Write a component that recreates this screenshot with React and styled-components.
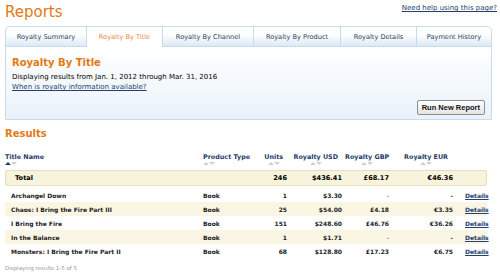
import React from 'react'
import styled, { createGlobalStyle } from 'styled-components'

const GlobalStyle = createGlobalStyle`
  html, body {
    margin: 0;
    padding: 0;
    background: #fff;
  }
  body {
    font-family: "DejaVu Sans", Verdana, sans-serif;
    color: #000;
  }
`

const tabs = ['Royalty Summary', 'Royalty By Title', 'Royalty By Channel', 'Royalty By Product', 'Royalty Details', 'Payment History']
const tabWidths = [81, 76, 91, 87, 76, 76]

const rows = [
  { id: 1, title: 'Archangel Down', type: 'Book', units: '1', usd: '$3.30', gbp: '-', eur: '-' },
  { id: 2, title: 'Chaos: I Bring the Fire Part III', type: 'Book', units: '25', usd: '$54.00', gbp: '£4.18', eur: '€3.35' },
  { id: 3, title: 'I Bring the Fire', type: 'Book', units: '151', usd: '$248.60', gbp: '£46.76', eur: '€36.26' },
  { id: 4, title: 'In the Balance', type: 'Book', units: '1', usd: '$1.71', gbp: '-', eur: '-' },
  { id: 5, title: 'Monsters: I Bring the Fire Part II', type: 'Book', units: '68', usd: '$128.80', gbp: '£17.23', eur: '€6.75' },
]

function SortArrows({ active }) {
  return (
    <Arrows>
      <Arrow $dir="up" $on={active} />
      <Arrow $dir="down" />
    </Arrows>
  )
}

function Head({ label, align = 'left', active, pr = 0, pl = 0 }) {
  return (
    <Th $align={align} $pr={pr} $pl={pl}>
      <HeadInner $align={align}>
        <span>{label}</span>
        <SortArrows active={active} />
      </HeadInner>
    </Th>
  )
}

export default function App() {
  return (
    <Page>
      <GlobalStyle />
      <TopBar>
        <Title>Reports</Title>
        <HelpLink href="#">Need help using this page?</HelpLink>
      </TopBar>

      <TabRow>
        {tabs.map((t, i) => (
          <Tab key={t} $active={i === 1} $first={i === 0} $last={i === tabs.length - 1} style={{ width: tabWidths[i] }}>
            {t}
          </Tab>
        ))}
      </TabRow>

      <Panel>
        <PanelTitle>Royalty By Title</PanelTitle>
        <PanelText>Displaying results from Jan. 1, 2012 through Mar. 31, 2016</PanelText>
        <PanelLink href="#">When is royalty information available?</PanelLink>
        <ButtonRow>
          <RunButton>Run New Report</RunButton>
        </ButtonRow>
      </Panel>

      <SectionTitle>Results</SectionTitle>

      <Table>
        <colgroup>
          <col style={{ width: 195 }} />
          <col style={{ width: 62 }} />
          <col style={{ width: 28 }} />
          <col style={{ width: 55 }} />
          <col style={{ width: 47 }} />
          <col style={{ width: 64 }} />
          <col style={{ width: 31 }} />
        </colgroup>
        <thead>
          <tr>
            <Head label="Title Name" active />
            <Head label="Product Type" pl={3} />
            <Head label="Units" align="right" pr={7} />
            <Head label="Royalty USD" align="right" pr={7} />
            <Head label="Royalty GBP" align="right" pr={4} />
            <Head label="Royalty EUR" align="right" pr={8} />
            <Th />
          </tr>
        </thead>
        <tbody>
          <TotalRow>
            <TotalCell $first>Total</TotalCell>
            <TotalCell />
            <TotalCell $num>246</TotalCell>
            <TotalCell $num>$436.41</TotalCell>
            <TotalCell $num>£68.17</TotalCell>
            <TotalCell $num>€46.36</TotalCell>
            <TotalCell $last />
          </TotalRow>
          <Spacer><td colSpan={7} /></Spacer>
          {rows.map((r, i) => (
            <Row key={r.id} $shade={i % 2 === 1}>
              <Td $pl={6}>{r.title}</Td>
              <Td $pl={3}>{r.type}</Td>
              <Td $num>{r.units}</Td>
              <Td $num>{r.usd}</Td>
              <Td $num $dash={r.gbp === '-'}>{r.gbp}</Td>
              <Td $num>{r.eur}</Td>
              <Td $pl={9}><DetailsLink href="#">Details</DetailsLink></Td>
            </Row>
          ))}
        </tbody>
      </Table>

      <Footer>Displaying results 1-5 of 5</Footer>
    </Page>
  )
}

const Page = styled.div`
  width: 500px;
  height: 277px;
  padding: 1px 3px 0 5px;
  box-sizing: border-box;
  overflow: hidden;
`

const TopBar = styled.div`
  display: flex;
  justify-content: space-between;
  align-items: flex-start;
`

const Title = styled.h1`
  margin: 0;
  font-size: 15px;
  font-weight: normal;
  color: #e47911;
  line-height: 22px;
`

const HelpLink = styled.a`
  font-size: 7px;
  color: #23406e;
  text-decoration: underline;
  margin-top: 3px;
`

const TabRow = styled.div`
  display: flex;
  margin-top: 3px;
  width: 487px;
`

const Tab = styled.div`
  box-sizing: border-box;
  height: 21px;
  display: flex;
  align-items: center;
  justify-content: center;
  font-size: 6.6px;
  color: ${p => (p.$active ? '#e8873a' : '#2b3d5c')};
  background: ${p => (p.$active ? '#fff' : 'linear-gradient(#ffffff 40%, #dbe9f5)')};
  border-top: 1px solid #c6dcec;
  border-left: 1px solid #c6dcec;
  border-right: ${p => (p.$last ? '1px solid #c6dcec' : 'none')};
  border-bottom: ${p => (p.$active ? 'none' : '1px solid #c6dcec')};
  border-top-left-radius: ${p => (p.$first ? '5px' : '0')};
  border-top-right-radius: ${p => (p.$last ? '5px' : '0')};
`

const Panel = styled.div`
  box-sizing: border-box;
  width: 487px;
  height: 73px;
  border: 1px solid #c6dcec;
  border-top: none;
  background: linear-gradient(#ffffff, #e9f2fa);
  padding: 9px 6px 4px 6px;
  display: flex;
  flex-direction: column;
`

const PanelTitle = styled.div`
  font-size: 10px;
  font-weight: bold;
  color: #e47911;
  line-height: 13px;
`

const PanelText = styled.div`
  font-size: 7px;
  line-height: 10px;
  margin-top: 3px;
`

const PanelLink = styled.a`
  font-size: 7px;
  line-height: 10px;
  color: #23406e;
  text-decoration: underline;
`

const ButtonRow = styled.div`
  display: flex;
  justify-content: flex-end;
  margin-top: auto;
`

const RunButton = styled.button`
  font-family: "Liberation Sans", Arial, sans-serif;
  font-size: 7.5px;
  font-weight: bold;
  color: #111;
  height: 15px;
  padding: 0 4px;
  border: 1px solid #8e8e8e;
  border-radius: 2px;
  background: linear-gradient(#ffffff, #e4e4e4);
`

const SectionTitle = styled.h2`
  margin: 7px 0 0;
  font-size: 10px;
  font-weight: bold;
  color: #e47911;
  line-height: 14px;
`

const Table = styled.table`
  margin-top: 12px;
  border-collapse: separate;
  border-spacing: 0;
  table-layout: fixed;
  width: 482px;
  font-size: 6px;
  font-weight: bold;
`

const Th = styled.th`
  text-align: ${p => p.$align || 'left'};
  padding: 0 ${p => p.$pr || 0}px 5px ${p => p.$pl || 0}px;
  color: #1f3b6b;
  font-size: 6.4px;
  vertical-align: bottom;
  white-space: nowrap;
`

const HeadInner = styled.div`
  display: inline-flex;
  flex-direction: column;
  align-items: ${p => (p.$align === 'right' ? 'center' : 'flex-start')};
  line-height: 8px;
`

const Arrows = styled.div`
  display: flex;
  margin-top: 1px;
`

const Arrow = styled.span`
  width: 0;
  height: 0;
  border-left: 3px solid transparent;
  border-right: 3px solid transparent;
  ${p => (p.$dir === 'up'
    ? `border-bottom: 3px solid ${p.$on ? '#1f3b6b' : '#cfcfcf'};`
    : 'border-top: 3px solid #cfcfcf;')}
`

const TotalRow = styled.tr`
  height: 16px;
`

const TotalCell = styled.td`
  background: #f7f3dc;
  border-top: 1px solid #e6dfb8;
  border-bottom: 1px solid #e6dfb8;
  border-left: ${p => (p.$first ? '1px solid #e6dfb8' : 'none')};
  border-right: ${p => (p.$last ? '1px solid #e6dfb8' : 'none')};
  border-radius: ${p => (p.$first ? '3px 0 0 3px' : p.$last ? '0 3px 3px 0' : '0')};
  text-align: ${p => (p.$num ? 'right' : 'left')};
  padding: 0 ${p => (p.$num ? 3 : 0)}px 0 ${p => (p.$first ? 9 : 0)}px;
  font-size: 6.6px;
  vertical-align: middle;
`

const Spacer = styled.tr`
  height: 1px;
`

const Row = styled.tr`
  height: 14px;
  background: ${p => (p.$shade ? '#faf6e3' : 'transparent')};
`

const Td = styled.td`
  text-align: ${p => (p.$num ? 'right' : 'left')};
  padding: 0 ${p => (p.$num ? 3 : 0)}px 0 ${p => p.$pl || 0}px;
  color: ${p => (p.$dash ? '#888' : '#222')};
  vertical-align: middle;
  white-space: nowrap;
`

const DetailsLink = styled.a`
  color: #23406e;
  text-decoration: underline;
`

const Footer = styled.div`
  margin-top: 7px;
  font-size: 5.5px;
  color: #9a9a9a;
`
